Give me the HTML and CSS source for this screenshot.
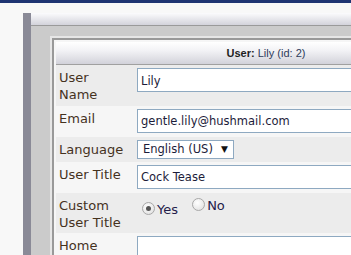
FILE: index.html
```html
<!DOCTYPE html>
<html>
<head>
<meta charset="utf-8">
<link rel="stylesheet" href="styles.css">
</head>
<body>
<div class="topbar"></div>
<div class="frame">
  <div class="frame-head"></div>
  <div class="frame-body">
    <div class="box-outer">
      <div class="box-inner">
        <table class="form">
          <thead>
            <tr><th colspan="2" class="thead"><b>User:</b> <span class="who">Lily (id: 2)</span></th></tr>
          </thead>
          <tbody>
            <tr class="r1 odd">
              <td class="lbl">User<br>Name</td>
              <td class="fld"><input class="txt" type="text" value="Lily"></td>
            </tr>
            <tr class="r2 even">
              <td class="lbl">Email</td>
              <td class="fld"><input class="txt" type="text" value="gentle.lily@hushmail.com"></td>
            </tr>
            <tr class="r3 odd">
              <td class="lbl">Language</td>
              <td class="fld"><div class="sel"><span class="sel-text">English (US)</span><span class="sel-arrow">▼</span></div></td>
            </tr>
            <tr class="r4 even">
              <td class="lbl">User Title</td>
              <td class="fld"><input class="txt" type="text" value="Cock Tease"></td>
            </tr>
            <tr class="r5 odd">
              <td class="lbl">Custom<br>User Title</td>
              <td class="fld radios">
                <label class="opt"><span class="radio checked"></span>Yes</label>
                <label class="opt"><span class="radio"></span>No</label>
              </td>
            </tr>
            <tr class="r6 even">
              <td class="lbl">Home</td>
              <td class="fld"><input class="txt" type="text" value=""></td>
            </tr>
          </tbody>
        </table>
      </div>
    </div>
  </div>
</div>
</body>
</html>
```

FILE: styles.css
```css
html, body {
  margin: 0;
  padding: 0;
  background: #f8f8f8;
  overflow: hidden;
  width: 351px;
  height: 255px;
}
.topbar {
  height: 3px;
  background: #1f3472;
}
.frame {
  margin-top: 10px;
  margin-left: 23px;
  border-left: 8px solid #8a8a97;
  width: 600px;
}
.frame-head {
  height: 12px;
  background: linear-gradient(#fbfbfd, #d3d3db);
  border-bottom: 1px solid #9a9a9a;
}
.frame-body {
  background: #cbcbcb;
  padding: 10px 0 0 19px;
  height: 300px;
}
.box-outer {
  border: 2px solid #e6e6e6;
  border-right: none;
}
.box-inner {
  border: 2px solid #999999;
  border-right: none;
  padding: 2px 0 0 2px;
  background: #f6f6f6;
}
.form {
  border-collapse: collapse;
  width: 420px;
  font-family: "DejaVu Sans", Verdana, sans-serif;
  font-size: 13px;
}
.thead {
  height: 22px;
  padding: 0;
  background: linear-gradient(#ffffff, #f2f2f5 40%, #d2d2da);
  border-bottom: 1px solid #a0a0a0;
  font-family: "Liberation Sans", Tahoma, sans-serif;
  font-size: 11px;
  font-weight: normal;
  color: #1e1e1e;
  text-align: center;
}
.thead b { font-weight: bold; }
.who { color: #2d3b5a; }
.odd { background: #ececec; }
.even { background: #f6f6f6; }
.r1 { height: 41px; }
.r2 { height: 31px; }
.r3 { height: 25px; }
.r4 { height: 31px; }
.r5 { height: 40px; }
.r6 { height: 40px; }
.lbl {
  width: 72px;
  padding: 4px 3px 0 3px;
  vertical-align: top;
  color: #45321e;
  line-height: 17px;
}
.fld {
  vertical-align: top;
  padding: 3px 0 0 3px;
}
.txt {
  box-sizing: border-box;
  width: 280px;
  height: 24px;
  margin: 0;
  padding: 1px 3px 0 3px;
  border: 1px solid #8ea9c1;
  background: #ffffff;
  font-family: "DejaVu Sans", Verdana, sans-serif;
  font-size: 11.5px;
  color: #1c1c3a;
  outline: none;
}
.sel {
  box-sizing: border-box;
  width: 97px;
  height: 19px;
  border: 1px solid #8ea9c1;
  background: #fff;
  display: flex;
  align-items: center;
  justify-content: space-between;
  padding: 0 5px 0 5px;
  color: #1c1c3a;
  font-size: 11.5px;
}
.sel-arrow {
  font-size: 9px;
  color: #111;
}
.radios {
  padding-top: 4px;
  padding-left: 8px;
}
.opt {
  display: inline-flex;
  align-items: center;
  font-size: 13px;
  color: #24204a;
  margin-right: 10px;
  line-height: 15px;
  padding-top: 1px;
}
.radio {
  box-sizing: border-box;
  width: 13px;
  height: 13px;
  border-radius: 50%;
  border: 1px solid #a8a8a8;
  background: radial-gradient(circle at 40% 35%, #ffffff, #dcdcdc);
  margin-right: 2px;
  margin-top: -2px;
  display: inline-flex;
  align-items: center;
  justify-content: center;
}
.radio.checked::after {
  content: "";
  width: 5px;
  height: 5px;
  border-radius: 50%;
  background: #555;
}
```
